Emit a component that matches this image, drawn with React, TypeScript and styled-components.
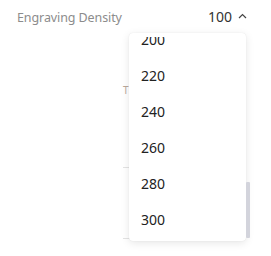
import styled, { createGlobalStyle } from "styled-components";

const options = [200, 220, 240, 260, 280, 300];

const GlobalStyle = createGlobalStyle`
    html, body {
        margin: 0;
        padding: 0;
        background: #fff;
        font-family: "Noto Sans", "Open Sans", sans-serif;
    }
`;

function App() {
    return (
        <>
            <GlobalStyle />
            <Wrapper>
                <Header>
                    <Label>Engraving Density</Label>
                    <Value>
                        100
                        <svg width="9" height="6" viewBox="0 0 9 6">
                            <path d="M1 5 L4.5 1.5 L8 5" fill="none" stroke="#444" strokeWidth="1.2" />
                        </svg>
                    </Value>
                </Header>
                <Behind>
                    <BehindRow $h={134}>
                        <Mark>T</Mark>
                    </BehindRow>
                    <BehindRow $h={71} />
                </Behind>
                <Dropdown>
                    <Scroll>
                        <List>
                            {options.map((o) => (
                                <Item key={o}>{o}</Item>
                            ))}
                        </List>
                    </Scroll>
                    <Thumb />
                </Dropdown>
            </Wrapper>
        </>
    );
}

const Wrapper = styled.div`
    position: relative;
    width: 271px;
    height: 256px;
    overflow: hidden;
`;

const Header = styled.div`
    display: flex;
    align-items: center;
    justify-content: space-between;
    height: 34px;
    padding: 0 24px 0 17px;
    box-sizing: border-box;
`;

const Label = styled.span`
    color: #8c8c8c;
    font-size: 12.5px;
    letter-spacing: -0.1px;
`;

const Value = styled.span`
    display: flex;
    align-items: center;
    gap: 6px;
    color: #333;
    font-size: 14px;
    margin-top: -2px;
`;

const Behind = styled.div`
    margin-left: 123px;
    width: 117px;
    display: flex;
    flex-direction: column;
`;

const BehindRow = styled.div<{ $h: number }>`
    height: ${(p) => p.$h}px;
    border-bottom: 1px solid #e3e3e3;
    box-sizing: border-box;
    padding-top: 46px;
    line-height: 1;
`;

const Mark = styled.span`
    font-size: 10px;
    color: #b9a89a;
`;

const Dropdown = styled.div`
    position: absolute;
    left: 129px;
    top: 33px;
    width: 117px;
    height: 208px;
    padding: 4px 0;
    box-sizing: border-box;
    background: #fff;
    border-radius: 4px;
    box-shadow: 0 2px 8px rgba(0, 0, 0, 0.1), 0 0 1px rgba(0, 0, 0, 0.12);
`;

const Scroll = styled.div`
    height: 100%;
    overflow: hidden;
`;

const List = styled.div`
    display: flex;
    flex-direction: column;
    margin-top: -16px;
`;

const Item = styled.div`
    height: 36px;
    display: flex;
    align-items: center;
    padding-left: 12px;
    font-size: 14px;
    color: #222;
`;

const Thumb = styled.div`
    position: absolute;
    right: -4px;
    top: 149px;
    width: 4px;
    height: 56px;
    border-radius: 1px;
    background: #d3d4dc;
`;

export default App;
